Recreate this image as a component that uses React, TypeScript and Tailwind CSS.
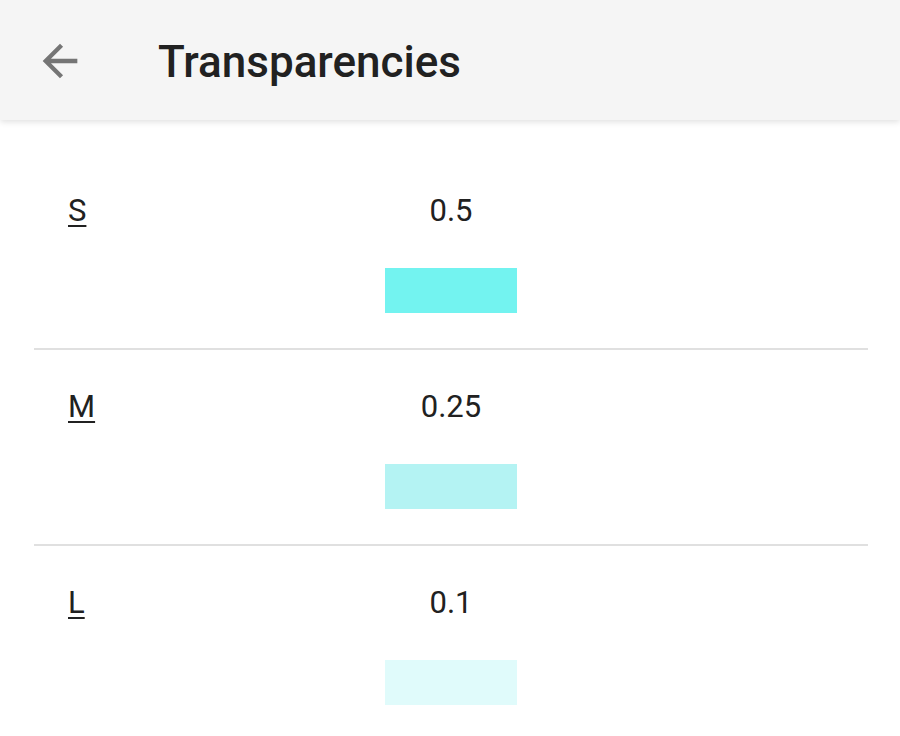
import React from "react";

interface Level {
  label: string;
  value: string;
  swatch: string;
}

const levels: Level[] = [
  { label: "S", value: "0.5", swatch: "bg-[#73f3f0]" },
  { label: "M", value: "0.25", swatch: "bg-[#b4f3f3]" },
  { label: "L", value: "0.1", swatch: "bg-[#e0fbfb]" },
];

function BackArrow() {
  return (
    <svg width="52" height="52" viewBox="0 0 24 24" className="fill-[#757575]">
      <path d="M20 11H7.83l5.59-5.59L12 4l-8 8 8 8 1.41-1.41L7.83 13H20v-2z" />
    </svg>
  );
}

function Row({ level, last }: { level: Level; last: boolean }) {
  return (
    <div className={`ml-[34px] mr-[32px] grid grid-cols-[1fr_auto_1fr] pt-[39px] pb-[35px] ${last ? "" : "border-b-2 border-[#e0e0e0]"}`}>
      <div className="pl-[34px]">
        <span className="text-[31px] leading-[35px] text-[#212121] underline decoration-[1.5px] underline-offset-[4px]">{level.label}</span>
      </div>
      <div className="flex flex-col items-center">
        <span className="text-[31px] leading-[35px] text-[#212121]">{level.value}</span>
        <div className={`mt-[40px] w-[132px] h-[45px] ${level.swatch}`}></div>
      </div>
      <div></div>
    </div>
  );
}

export default function App() {
  return (
    <div className="w-[900px] h-[736px] overflow-hidden bg-white font-['Roboto',sans-serif]">
      <header className="h-[120px] bg-[#f5f5f5] flex items-center shadow-[0_2px_6px_rgba(0,0,0,0.12)] relative">
        <div className="pl-[34px] pt-[2px] flex items-center">
          <BackArrow />
        </div>
        <h1 className="ml-[72px] pt-[3px] text-[44px] font-medium text-[#212121]">Transparencies</h1>
      </header>
      <main className="pt-[34px]">
        {levels.map((level, i) => (
          <Row key={level.label} level={level} last={i === levels.length - 1} />
        ))}
      </main>
    </div>
  );
}
